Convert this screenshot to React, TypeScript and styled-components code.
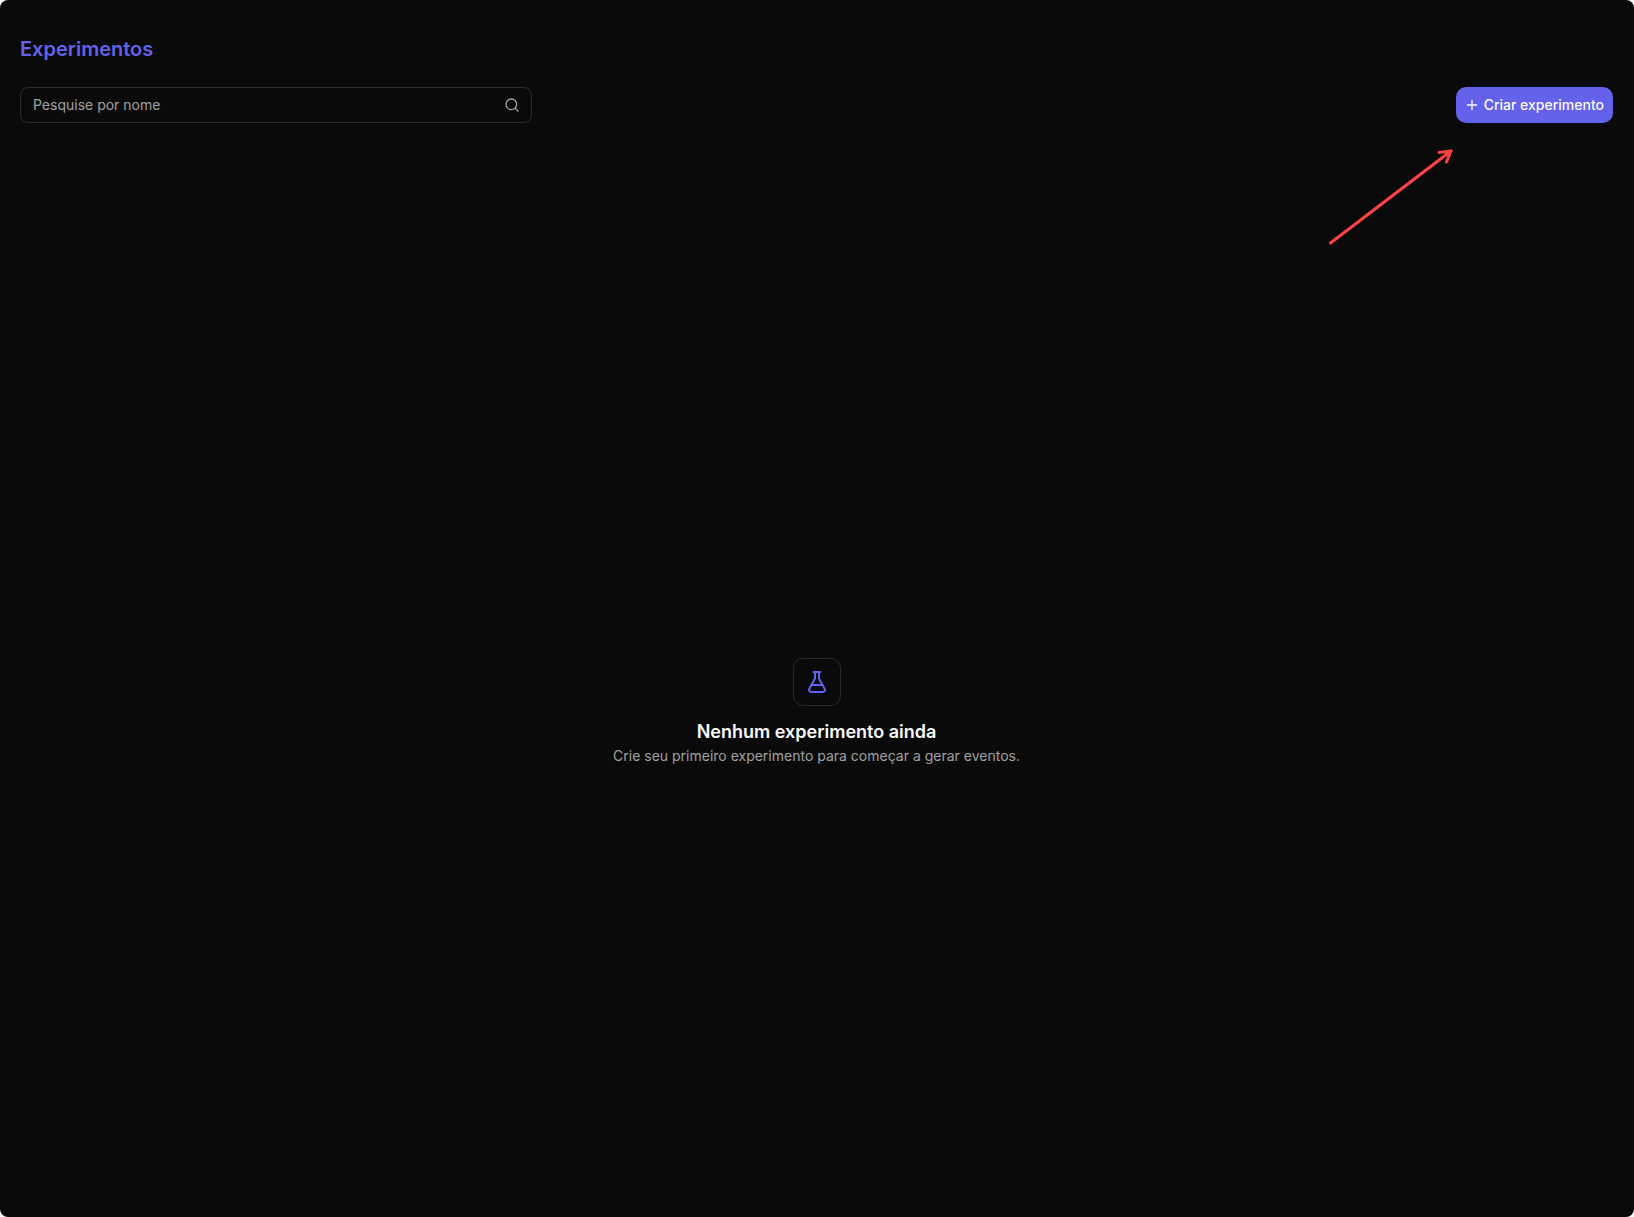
import React, { useState } from "react";
import styled, { createGlobalStyle } from "styled-components";
import { FlaskConical, Plus, Search } from "lucide-react";

const GlobalStyle = createGlobalStyle`
  *, *::before, *::after { box-sizing: border-box; }
  body {
    margin: 0;
    background: #ffffff;
    font-family: Inter, "Liberation Sans", sans-serif;
    -webkit-font-smoothing: antialiased;
  }
`;

const Page = styled.main`
  display: flex;
  flex-direction: column;
  min-height: 100vh;
  padding: 32px 21px 0 20px;
  border-radius: 8px;
  background: #0a0a0a;
  color: #fafafa;
`;

const PageTitle = styled.h1`
  margin: 0 0 20px;
  font-size: 20px;
  line-height: 35px;
  font-weight: 600;
  color: #6461ea;
`;

const Toolbar = styled.div`
  display: flex;
  align-items: center;
  justify-content: space-between;
  gap: 16px;
`;

const SearchField = styled.label`
  display: flex;
  align-items: center;
  flex: 0 1 512px;
  height: 36px;
  padding: 0 11px 0 12px;
  border: 1px solid #2b2b2b;
  border-radius: 8px;
  color: #a1a1a1;
`;

const SearchInput = styled.input`
  flex: 1;
  min-width: 0;
  padding: 0;
  border: 0;
  outline: 0;
  background: transparent;
  font: inherit;
  font-size: 14px;
  line-height: 20px;
  color: #fafafa;

  &::placeholder {
    color: #a1a1a1;
    opacity: 1;
  }
`;

const CreateAction = styled.div`
  position: relative;
`;

const CreateButton = styled.button`
  display: flex;
  align-items: center;
  gap: 4px;
  height: 36px;
  padding: 0 9px 0 8px;
  border: 0;
  border-radius: 10px;
  background: #6461ea;
  color: #fafafa;
  font: inherit;
  font-size: 14px;
  line-height: 20px;
  font-weight: 500;
  white-space: nowrap;
  cursor: pointer;
`;

const Pointer = styled.svg`
  position: absolute;
  top: 53px;
  right: 153px;
  pointer-events: none;
`;

const EmptyState = styled.section`
  display: flex;
  flex: 1;
  flex-direction: column;
  align-items: center;
  justify-content: center;
  padding-top: 84px;
  text-align: center;
`;

const IconTile = styled.div`
  display: grid;
  place-items: center;
  width: 48px;
  height: 48px;
  margin-bottom: 12px;
  border: 1px solid #2b2b2b;
  border-radius: 10px;
  color: #6461ea;
`;

const EmptyTitle = styled.h2`
  margin: 0;
  font-size: 18px;
  line-height: 28px;
  font-weight: 600;
`;

const EmptyText = styled.p`
  margin: 0;
  font-size: 14px;
  line-height: 20px;
  color: #a1a1a1;
`;

export default function App() {
  const [query, setQuery] = useState("");

  return (
    <>
      <GlobalStyle />
      <Page>
        <PageTitle>Experimentos</PageTitle>
        <Toolbar>
          <SearchField>
            <SearchInput
              type="text"
              aria-label="Pesquise por nome"
              placeholder="Pesquise por nome"
              value={query}
              onChange={(event) => setQuery(event.target.value)}
            />
            <Search size={16} strokeWidth={2} aria-hidden="true" />
          </SearchField>
          <CreateAction>
            <CreateButton type="button">
              <Plus size={16} strokeWidth={2} aria-hidden="true" />
              Criar experimento
            </CreateButton>
            <Pointer
              width="140"
              height="110"
              viewBox="0 0 140 110"
              fill="none"
              stroke="#ff4245"
              strokeWidth="3"
              strokeLinecap="round"
              strokeLinejoin="round"
              aria-hidden="true"
            >
              <path d="M10.5 103 131 11" />
              <path d="M119 12.5 131 11 126.5 22" />
            </Pointer>
          </CreateAction>
        </Toolbar>
        <EmptyState>
          <IconTile>
            <FlaskConical size={24} strokeWidth={2} aria-hidden="true" />
          </IconTile>
          <EmptyTitle>Nenhum experimento ainda</EmptyTitle>
          <EmptyText>
            Crie seu primeiro experimento para começar a gerar eventos.
          </EmptyText>
        </EmptyState>
      </Page>
    </>
  );
}
